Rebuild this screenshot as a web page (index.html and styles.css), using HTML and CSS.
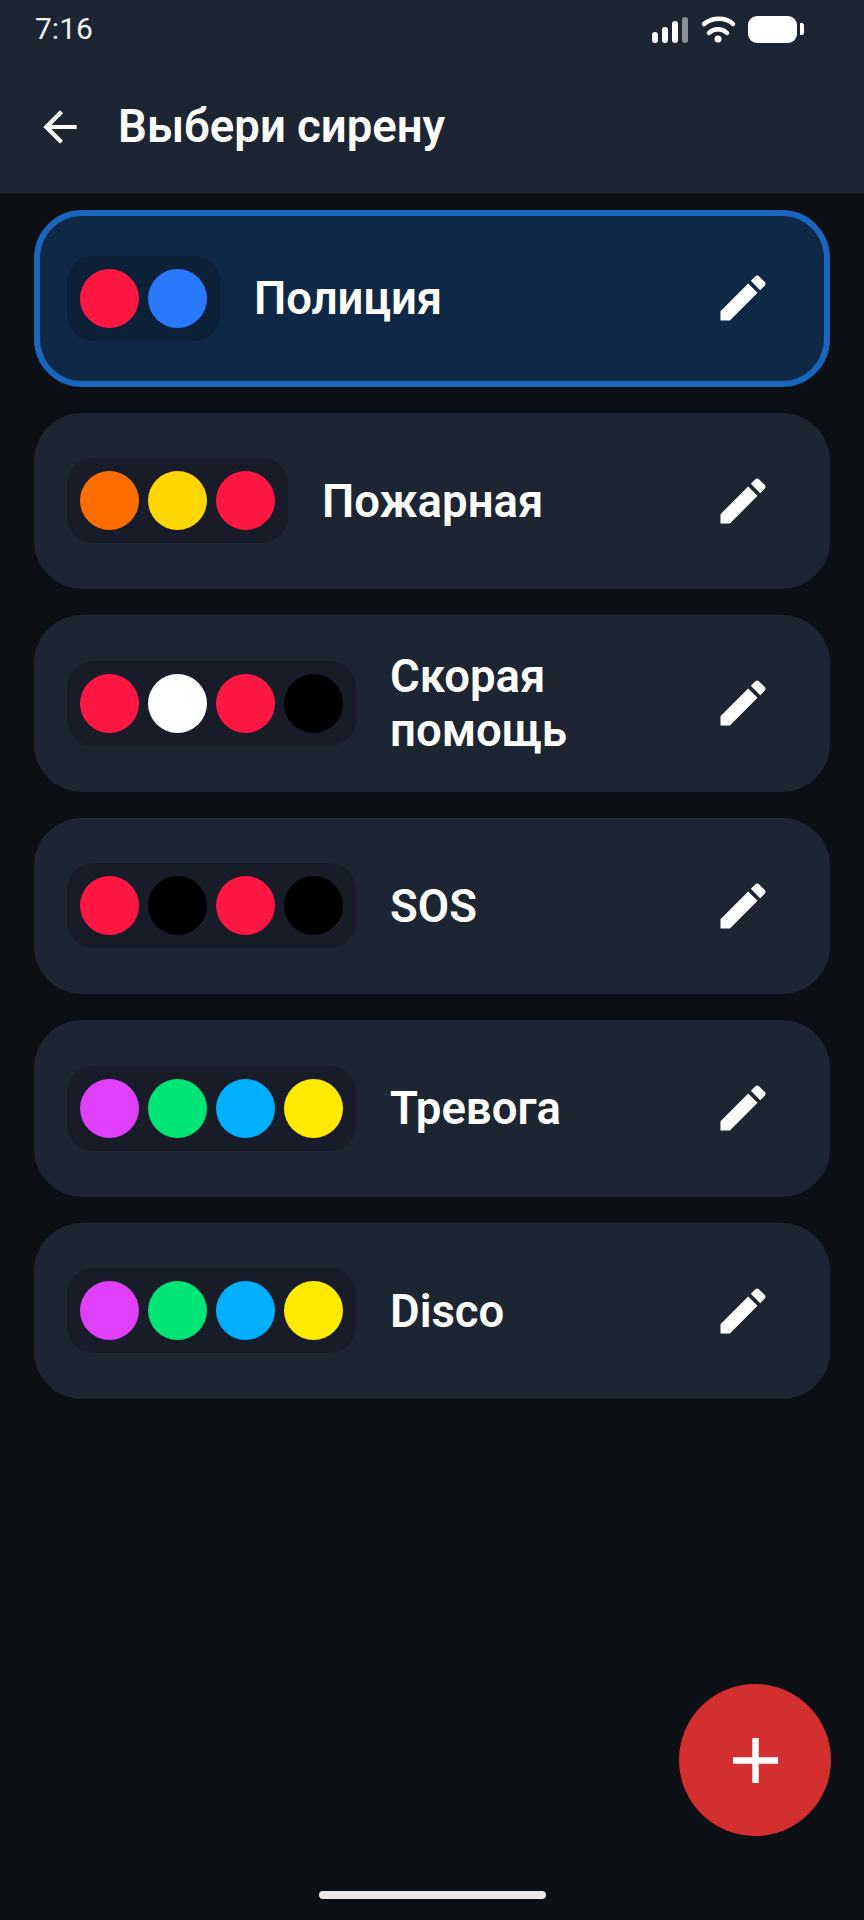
FILE: index.html
```html
<!DOCTYPE html>
<html lang="ru">
<head>
<meta charset="utf-8">
<title>Выбери сирену</title>
<link rel="stylesheet" href="styles.css">
</head>
<body>
<div class="screen">
  <header class="header">
    <div class="status">
      <span class="time">7:16</span>
      <svg class="status-icons" width="156" height="32" viewBox="0 0 156 32">
        <rect x="2" y="18" width="6" height="11" rx="3" fill="#fff"/>
        <rect x="12" y="13" width="6" height="16" rx="3" fill="#fff"/>
        <rect x="22" y="7" width="6" height="22" rx="3" fill="#fff"/>
        <rect x="32" y="3" width="6" height="26" rx="3" fill="#8a8f99"/>
        <path d="M54 10 C62 3 76 3 83 10" fill="none" stroke="#fff" stroke-width="4.500" stroke-linecap="round"/>
        <path d="M59 19 C64 14 72 14 77 19" fill="none" stroke="#fff" stroke-width="4.500" stroke-linecap="round"/>
        <circle cx="68" cy="25" r="3.500" fill="#fff"/>
        <rect x="98" y="2" width="49" height="27" rx="9" fill="#fff"/>
        <path d="M150 9 h1.500 a2.500 2.500 0 0 1 2.500 2.500 v7 a2.500 2.500 0 0 1 -2.500 2.500 h-1.500 z" fill="#fff"/>
      </svg>
    </div>
    <div class="appbar">
      <svg class="back" viewBox="0 0 24 24" width="50" height="50"><path fill="#fff" d="M20 11H7.830l5.590-5.590L12 4l-8 8 8 8 1.410-1.410L7.830 13H20v-2z"/></svg>
      <h1 class="title">Выбери сирену</h1>
    </div>
  </header>

  <main class="list">
    <section class="card card-selected">
      <div class="dots"><i class="dot red"></i><i class="dot blue"></i></div>
      <span class="name">Полиция</span>
      <svg class="edit" viewBox="0 0 24 24" width="60" height="60"><path fill="#fff" d="M3 17.250V21h3.750L17.810 9.940l-3.750-3.750L3 17.250zM20.710 7.040c.39-.39.39-1.020 0-1.410l-2.340-2.340c-.39-.39-1.020-.39-1.410 0l-1.830 1.830 3.750 3.750 1.830-1.830z"/></svg>
    </section>
    <section class="card">
      <div class="dots"><i class="dot orange"></i><i class="dot amber"></i><i class="dot red"></i></div>
      <span class="name">Пожарная</span>
      <svg class="edit" viewBox="0 0 24 24" width="60" height="60"><path fill="#fff" d="M3 17.250V21h3.750L17.810 9.940l-3.750-3.750L3 17.250zM20.710 7.040c.39-.39.39-1.020 0-1.410l-2.340-2.340c-.39-.39-1.020-.39-1.410 0l-1.830 1.830 3.750 3.750 1.830-1.830z"/></svg>
    </section>
    <section class="card">
      <div class="dots"><i class="dot red"></i><i class="dot white"></i><i class="dot red"></i><i class="dot black"></i></div>
      <span class="name">Скорая помощь</span>
      <svg class="edit" viewBox="0 0 24 24" width="60" height="60"><path fill="#fff" d="M3 17.250V21h3.750L17.810 9.940l-3.750-3.750L3 17.250zM20.710 7.040c.39-.39.39-1.020 0-1.410l-2.340-2.340c-.39-.39-1.020-.39-1.410 0l-1.830 1.830 3.750 3.750 1.830-1.830z"/></svg>
    </section>
    <section class="card">
      <div class="dots"><i class="dot red"></i><i class="dot black"></i><i class="dot red"></i><i class="dot black"></i></div>
      <span class="name">SOS</span>
      <svg class="edit" viewBox="0 0 24 24" width="60" height="60"><path fill="#fff" d="M3 17.250V21h3.750L17.810 9.940l-3.750-3.750L3 17.250zM20.710 7.040c.39-.39.39-1.020 0-1.410l-2.340-2.340c-.39-.39-1.020-.39-1.410 0l-1.830 1.830 3.750 3.750 1.830-1.830z"/></svg>
    </section>
    <section class="card">
      <div class="dots"><i class="dot purple"></i><i class="dot green"></i><i class="dot cyan"></i><i class="dot yellow"></i></div>
      <span class="name">Тревога</span>
      <svg class="edit" viewBox="0 0 24 24" width="60" height="60"><path fill="#fff" d="M3 17.250V21h3.750L17.810 9.940l-3.750-3.750L3 17.250zM20.710 7.040c.39-.39.39-1.020 0-1.410l-2.340-2.340c-.39-.39-1.020-.39-1.410 0l-1.830 1.830 3.750 3.750 1.830-1.830z"/></svg>
    </section>
    <section class="card">
      <div class="dots"><i class="dot purple"></i><i class="dot green"></i><i class="dot cyan"></i><i class="dot yellow"></i></div>
      <span class="name">Disco</span>
      <svg class="edit" viewBox="0 0 24 24" width="60" height="60"><path fill="#fff" d="M3 17.250V21h3.750L17.810 9.940l-3.750-3.750L3 17.250zM20.710 7.040c.39-.39.39-1.020 0-1.410l-2.340-2.340c-.39-.39-1.020-.39-1.410 0l-1.830 1.830 3.750 3.750 1.830-1.830z"/></svg>
    </section>
  </main>

  <button class="fab" aria-label="Добавить">
    <svg viewBox="0 0 24 24" width="77" height="77"><path fill="#fff" d="M19 13h-6v6h-2v-6H5v-2h6V5h2v6h6v2z"/></svg>
  </button>
  <div class="home-indicator"></div>
</div>
</body>
</html>
```

FILE: styles.css
```css
* {
  box-sizing: border-box;
}

html,
body {
  margin: 0;
  padding: 0;
  background: #0c1015;
}

.screen {
  position: relative;
  width: 864px;
  height: 1920px;
  overflow: hidden;
  background: #0c1015;
  font-family: Roboto, "Noto Sans", sans-serif;
  color: #fff;
}

.header {
  height: 193px;
  background: #1d2432;
  display: flex;
  flex-direction: column;
}

.status {
  height: 58px;
  padding: 11px 58px 0 35px;
  display: flex;
  justify-content: space-between;
  align-items: flex-start;
}

.time {
  font-size: 30px;
  line-height: 36px;
  color: #f0f1f3;
}

.status-icons {
  margin-top: 3px;
}

.appbar {
  flex: 1;
  padding: 3px 0 0 35px;
  display: flex;
  align-items: center;
  gap: 33px;
}

.title {
  margin: 0;
  font-size: 45.500px;
  line-height: 56px;
  font-weight: 600;
}

.list {
  padding: 17px 34px 0;
  display: flex;
  flex-direction: column;
  gap: 26px;
}

.card {
  height: 176.500px;
  padding: 0 57px 0 33px;
  border-radius: 48px;
  background: #1d2432;
  display: flex;
  align-items: center;
  gap: 34px;
}

.card-selected {
  background: #0f2845;
  border: 6px solid #1a66bf;
  padding: 0 51px 0 27px;
}

.dots {
  flex: none;
  height: 85px;
  padding: 0 13px;
  border-radius: 26px;
  background: rgba(0, 0, 0, 0.2);
  display: flex;
  align-items: center;
  gap: 9px;
}

.dot {
  display: block;
  width: 59px;
  height: 59px;
  border-radius: 50%;
}

.red { background: #ff1744; }
.blue { background: #2979ff; }
.orange { background: #ff6d00; }
.amber { background: #ffd600; }
.white { background: #fff; }
.black { background: #000; }
.purple { background: #e040fb; }
.green { background: #00e676; }
.cyan { background: #00b0ff; }
.yellow { background: #ffea00; }

.name {
  flex: 1;
  min-width: 0;
  padding-top: 2px;
  font-size: 45.500px;
  line-height: 54px;
  font-weight: 600;
}

.edit {
  flex: none;
}

.fab {
  position: absolute;
  left: 679px;
  top: 1684px;
  width: 152px;
  height: 152px;
  padding: 0;
  border: 0;
  border-radius: 50%;
  background: #d32f2f;
  display: flex;
  align-items: center;
  justify-content: center;
}

.home-indicator {
  position: absolute;
  left: 319px;
  top: 1891px;
  width: 227px;
  height: 8px;
  border-radius: 4px;
  background: #eaeaec;
}
```
